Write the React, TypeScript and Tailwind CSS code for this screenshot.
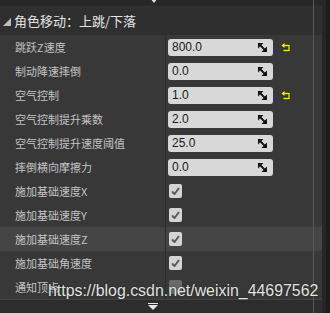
import React from "react";

type Row = {
  label: string;
  value?: string;
  reset?: boolean;
  check?: boolean;
  disabled?: boolean;
  hot?: boolean;
};

const rows: Row[] = [
  { label: "跳跃Z速度", value: "800.0", reset: true },
  { label: "制动降速摔倒", value: "0.0" },
  { label: "空气控制", value: "1.0", reset: true },
  { label: "空气控制提升乘数", value: "2.0" },
  { label: "空气控制提升速度阈值", value: "25.0" },
  { label: "摔倒横向摩擦力", value: "0.0" },
  { label: "施加基础速度X", check: true },
  { label: "施加基础速度Y", check: true },
  { label: "施加基础速度Z", check: true, hot: true },
  { label: "施加基础角速度", check: true },
  { label: "通知顶点", check: false, disabled: true },
];

function DragIcon() {
  return (
    <svg width="9" height="9" viewBox="0 0 9 9">
      <polygon points="0,0 5.5,0 0,5.5" fill="#111" />
      <polygon points="9,9 3.5,9 9,3.5" fill="#111" />
      <line x1="2" y1="2" x2="7" y2="7" stroke="#111" strokeWidth="1.8" />
    </svg>
  );
}

function ResetIcon() {
  return (
    <svg width="10" height="9" viewBox="0 0 10 9">
      <path d="M3 2.5 H8 V7.5 H2.5" fill="none" stroke="#202020" strokeWidth="2.6" />
      <path d="M3 2.5 H8 V7.5 H2.5" fill="none" stroke="#f2f200" strokeWidth="1.3" />
      <polygon points="0.5,2.5 3.5,0 3.5,5" fill="#f2f200" />
    </svg>
  );
}

function Check({ on, disabled }: { on: boolean; disabled?: boolean }) {
  return (
    <div
      className={`w-[13px] h-[14px] rounded-[2px] flex items-center justify-center ${
        disabled ? "bg-[#6a6a6a]" : "bg-[#d4d4d4]"
      }`}
    >
      {on && (
        <svg width="9" height="8" viewBox="0 0 9 8">
          <path d="M1 4.5 L3.5 7 L8 1" fill="none" stroke="#5a5a5a" strokeWidth="2" />
        </svg>
      )}
    </div>
  );
}

export default function App() {
  return (
    <div
      className="relative w-[330px] h-[313px] overflow-hidden bg-[#383838] flex"
      style={{ fontFamily: '"Noto Sans CJK SC", "Liberation Sans", sans-serif' }}
    >
      <div className="w-[322px] flex flex-col">
        <div className="h-[6px] bg-[#282828] relative">
          <div className="absolute left-[150px] -top-[2px] w-0 h-0 border-l-[4px] border-r-[4px] border-t-[5px] border-l-transparent border-r-transparent border-t-[#e0e0e0]" />
        </div>
        <div className="h-[29px] bg-[#2f2f2f] rounded-tr-[3px] flex items-center pl-[3px] text-[13px] text-[#e4e4e4]">
          <svg width="8" height="8" viewBox="0 0 8 8" className="mr-[3px] mt-[2px]">
            <polygon points="8,0 8,8 0,8" fill="#bdbdbd" />
          </svg>
          角色移动：上跳/下落
        </div>
        <div className="flex flex-col">
          {rows.map((r, i) => (
            <div
              key={i}
              className={`h-[24px] flex items-center ${r.hot ? "bg-[#454545]" : ""}`}
            >
              <div className="w-[165px] pl-[15px] text-[11px] text-[#c4c4c4] leading-none">
                {r.label}
              </div>
              <div className="w-px self-stretch bg-[#2c2c2c]" />
              <div className="flex items-center pl-[2px]">
                {r.value !== undefined ? (
                  <>
                    <div
                      className="w-[105px] h-[17px] rounded-[3px] bg-[#d8d8d8] flex items-center justify-between pl-[4px] pr-[6px] text-[12px] text-[#1a1a1a]"
                      style={{ fontFamily: '"Liberation Sans", sans-serif' }}
                    >
                      <span>{r.value}</span>
                      <DragIcon />
                    </div>
                    {r.reset && (
                      <div className="ml-[8px] mt-[1px]">
                        <ResetIcon />
                      </div>
                    )}
                  </>
                ) : (
                  <div className="ml-[1px]">
                    <Check on={!!r.check} disabled={r.disabled} />
                  </div>
                )}
              </div>
            </div>
          ))}
        </div>
        <div className="flex-1 bg-[#2d2d2d] border-t border-[#424242] relative">
          <div className="absolute left-[148px] top-[3px] w-[10px] h-[1px] bg-[#e6e6e6]" />
          <div className="absolute left-[148px] top-[5px] w-0 h-0 border-l-[5px] border-r-[5px] border-t-[5px] border-l-transparent border-r-transparent border-t-[#e6e6e6]" />
        </div>
      </div>
      <div className="w-[8px] flex">
        <div className="w-[4px] bg-[#262626]" />
        <div className="w-[4px] bg-[#1c1c1c]" />
      </div>
      <div className="absolute left-[313px] top-0 w-px h-full bg-[#5a5a5a]" />
      <div
        className="absolute left-[48px] top-[283px] text-[15.9px] leading-none text-[#e2e2e2] whitespace-nowrap"
        style={{ fontFamily: '"Liberation Sans", sans-serif', textShadow: "0 0 2px rgba(0,0,0,0.6)" }}
      >
        https://blog.csdn.net/weixin_44697562
      </div>
    </div>
  );
}
